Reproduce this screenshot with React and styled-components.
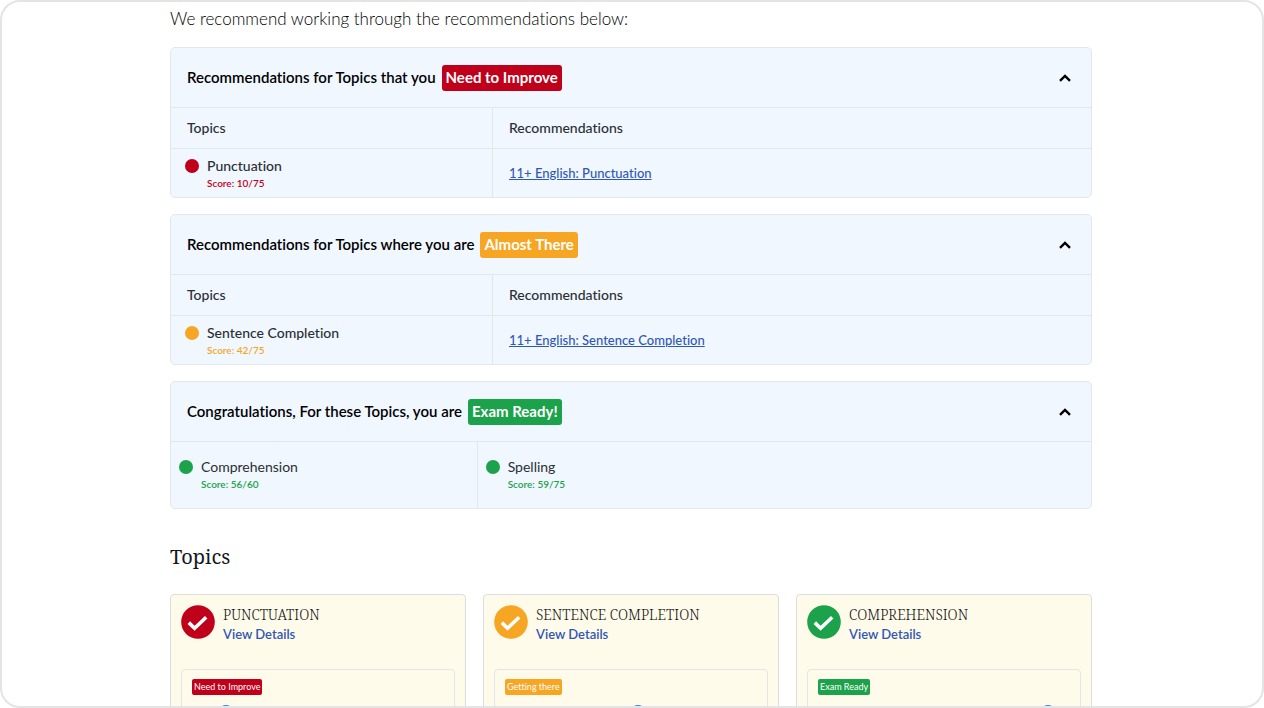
import { useState } from "react";
import styled, { createGlobalStyle } from "styled-components";

const GlobalStyle = createGlobalStyle`
  * {
    box-sizing: border-box;
  }
  body {
    margin: 0;
    background-color: #ffffff;
    color: #2b2f33;
    font-family: Lato, "Liberation Sans", sans-serif;
    font-variant-ligatures: none;
  }
`;

const colors = {
  red: "#c0001a",
  orange: "#f6a623",
  green: "#1ba24a",
};

const Frame = styled.div`
  height: 100vh;
  overflow: hidden;
  padding: 4px 170px 0 168px;
  border: 2px solid #e4e4e4;
  border-radius: 20px;
`;
const Intro = styled.p`
  margin: 0 0 15px;
  color: #000000;
  font-size: 17px;
  font-weight: 300;
  line-height: 26px;
`;
const Panels = styled.div`
  display: grid;
  gap: 16px;
`;
const Panel = styled.section`
  border: 1px solid #e3e7ea;
  border-radius: 5px;
  background-color: #f0f7ff;
  overflow: hidden;
`;
const PanelHeader = styled.div`
  display: flex;
  align-items: center;
  justify-content: space-between;
  height: 59px;
  padding: 0 16px;
`;
const PanelTitle = styled.h2`
  display: flex;
  align-items: baseline;
  gap: 6px;
  margin: 0;
  color: #000000;
  font-size: 15px;
  font-weight: 600;
`;
const Tag = styled.span`
  padding: 0 4px 1px;
  border-radius: 3px;
  background-color: ${(props) => props.$color};
  color: #ffffff;
  font-weight: 700;
  line-height: 25px;
`;
const Toggle = styled.button`
  display: grid;
  place-items: center;
  width: 20px;
  height: 20px;
  padding: 0;
  border: none;
  background: none;
  cursor: pointer;

  svg {
    transform: ${(props) => (props.$open ? "none" : "rotate(180deg)")};
  }
`;
const Table = styled.table`
  width: 100%;
  table-layout: fixed;
  border-spacing: 0;
  font-size: 14px;

  th,
  td {
    padding: 0 16px 2px;
    border-top: 1px solid #e3e7ea;
    text-align: left;
    font-weight: 500;
  }
  th {
    height: 41px;
  }
  td {
    height: 49px;
  }
  th:first-child,
  td:first-child {
    width: 35%;
    border-right: 1px solid #e3e7ea;
  }
  td:first-child {
    padding: 2px 14px 0;
  }
`;
const Topic = styled.div`
  display: grid;
  grid-template-columns: 14px 1fr;
  align-items: center;
  column-gap: 8px;
  font-size: 14px;
  line-height: 18px;
`;
const Dot = styled.span`
  width: 14px;
  height: 14px;
  border-radius: 50%;
  background-color: ${(props) => props.$color};
`;
const Score = styled.span`
  grid-column: 2;
  color: ${(props) => props.$color};
  font-size: 10px;
  font-weight: 600;
  line-height: 16px;
`;
const Link = styled.a`
  color: #2f57b5;
  font-size: 13px;
  font-weight: 500;
`;
const ReadyList = styled.div`
  display: grid;
  grid-template-columns: repeat(3, 1fr);
  border-top: 1px solid #e3e7ea;
`;
const ReadyItem = styled.div`
  display: grid;
  align-items: center;
  height: 66px;
  padding: 0 8px;

  &:first-child {
    border-right: 1px solid #e3e7ea;
  }
`;
const Heading = styled.h2`
  margin: 34px 0 23px;
  color: #15181b;
  font-family: "Noto Serif", "DejaVu Serif", serif;
  font-size: 20px;
  font-weight: 400;
  line-height: 28px;
`;
const Cards = styled.div`
  display: grid;
  grid-template-columns: repeat(3, 1fr);
  gap: 17px;
`;
const Card = styled.article`
  padding: 10px;
  border: 1px solid #dcdddd;
  border-radius: 4px;
  background-color: #fffbeb;
`;
const CardHeader = styled.div`
  display: flex;
  gap: 8px;

  svg {
    flex: none;
  }
`;
const CardTitle = styled.h3`
  margin: 0;
  color: #111111;
  font-family: "Noto Serif", "DejaVu Serif", serif;
  font-size: 14px;
  font-weight: 300;
  line-height: 20px;
  text-transform: uppercase;
`;
const DetailsLink = styled.a`
  display: block;
  color: #2f57b5;
  font-size: 13px;
  font-weight: 600;
  line-height: 18px;
  text-decoration: none;
`;
const Meter = styled.div`
  display: grid;
  justify-items: start;
  gap: 10px;
  margin-top: 26px;
  padding: 9px 10px;
  border: 1px solid #e3e5e6;
  border-radius: 4px;
`;
const SmallTag = styled.span`
  padding: 0 2px;
  border-radius: 2px;
  background-color: ${(props) => props.$color};
  color: #ffffff;
  font-size: 9px;
  line-height: 16px;
`;
const Range = styled.input`
  appearance: none;
  width: 100%;
  height: 16px;
  margin: 0;
  background: linear-gradient(#d8dce0, #d8dce0) center / 100% 4px no-repeat;

  &::-webkit-slider-thumb {
    appearance: none;
    width: 16px;
    height: 16px;
    border-radius: 50%;
    background-color: #1e88f5;
  }
`;

const recommendations = [
  {
    title: "Recommendations for Topics that you",
    tag: "Need to Improve",
    color: colors.red,
    topic: "Punctuation",
    score: "10/75",
  },
  {
    title: "Recommendations for Topics where you are",
    tag: "Almost There",
    color: colors.orange,
    topic: "Sentence Completion",
    score: "42/75",
  },
];

const cards = [
  { title: "Punctuation", tag: "Need to Improve", color: colors.red, value: 11 },
  { title: "Sentence Completion", tag: "Getting there", color: colors.orange, value: 53 },
  { title: "Comprehension", tag: "Exam Ready", color: colors.green, value: 94 },
];

const CheckBadge = ({ color }) => (
  <svg width="34" height="34" viewBox="0 0 34 34" aria-hidden="true">
    <circle cx="17" cy="17" r="16.8" fill={color} />
    <path d="M7.8 17.6 13.6 23.2 25.2 12.2" fill="none" stroke="#fff" strokeWidth="3.6" />
  </svg>
);

const TopicScore = ({ name, score, color }) => (
  <Topic>
    <Dot $color={color} />
    <span>{name}</span>
    <Score $color={color}>Score: {score}</Score>
  </Topic>
);

const Accordion = ({ title, tag, color, children }) => {
  const [open, setOpen] = useState(true);
  return (
    <Panel>
      <PanelHeader>
        <PanelTitle>
          {title} <Tag $color={color}>{tag}</Tag>
        </PanelTitle>
        <Toggle
          type="button"
          $open={open}
          aria-expanded={open}
          aria-label={`${title} ${tag}`}
          onClick={() => setOpen(!open)}
        >
          <svg width="12" height="8" viewBox="0 0 12 8">
            <path d="M1 6.8 6 1.9 11 6.8" fill="none" stroke="#000" strokeWidth="2.4" />
          </svg>
        </Toggle>
      </PanelHeader>
      {open && children}
    </Panel>
  );
};

const App = () => {
  return (
    <Frame>
      <GlobalStyle />
      <Intro>We recommend working through the recommendations below:</Intro>
      <Panels>
        {recommendations.map((item) => (
          <Accordion key={item.topic} title={item.title} tag={item.tag} color={item.color}>
            <Table>
              <thead>
                <tr>
                  <th>Topics</th>
                  <th>Recommendations</th>
                </tr>
              </thead>
              <tbody>
                <tr>
                  <td>
                    <TopicScore name={item.topic} score={item.score} color={item.color} />
                  </td>
                  <td>
                    <Link href="#">11+ English: {item.topic}</Link>
                  </td>
                </tr>
              </tbody>
            </Table>
          </Accordion>
        ))}
        <Accordion
          title="Congratulations, For these Topics, you are"
          tag="Exam Ready!"
          color={colors.green}
        >
          <ReadyList>
            <ReadyItem>
              <TopicScore name="Comprehension" score="56/60" color={colors.green} />
            </ReadyItem>
            <ReadyItem>
              <TopicScore name="Spelling" score="59/75" color={colors.green} />
            </ReadyItem>
          </ReadyList>
        </Accordion>
      </Panels>
      <Heading>Topics</Heading>
      <Cards>
        {cards.map((card) => (
          <Card key={card.title}>
            <CardHeader>
              <CheckBadge color={card.color} />
              <div>
                <CardTitle>{card.title}</CardTitle>
                <DetailsLink href="#">View Details</DetailsLink>
              </div>
            </CardHeader>
            <Meter>
              <SmallTag $color={card.color}>{card.tag}</SmallTag>
              <Range type="range" defaultValue={card.value} aria-label={`${card.title} score`} />
            </Meter>
          </Card>
        ))}
      </Cards>
    </Frame>
  );
};

export default App;
